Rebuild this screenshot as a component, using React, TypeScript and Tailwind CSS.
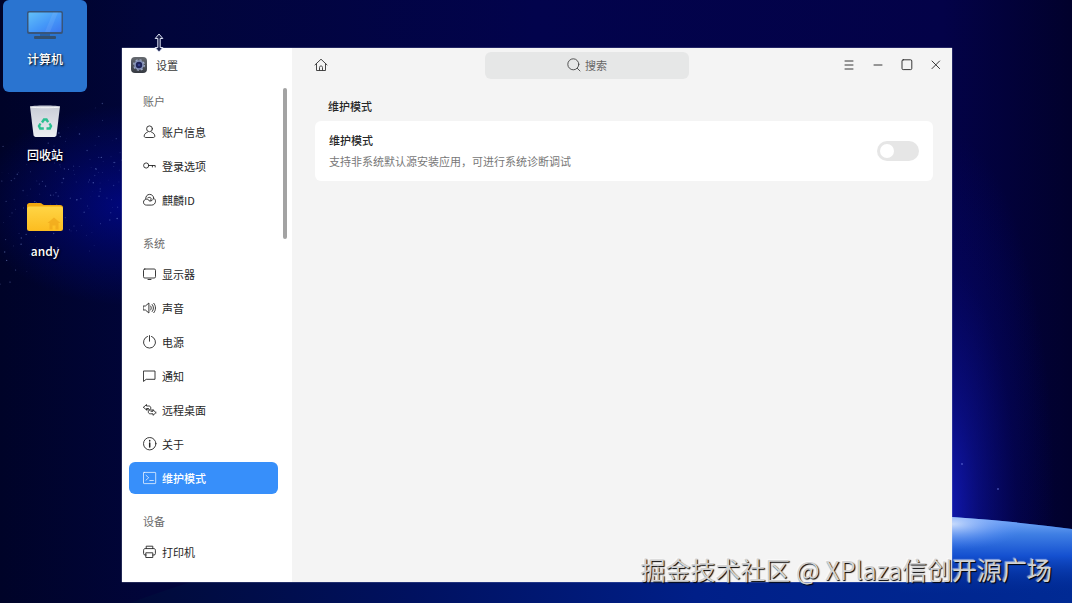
import { useState, type ReactNode } from "react";
import { clsx } from "clsx";

interface NavItem {
  id: string;
  label: string;
  icon: ReactNode;
}

interface NavGroup {
  title: string;
  items: NavItem[];
}

function Icon({ children }: { children: ReactNode }) {
  return (
    <svg
      width="14"
      height="14"
      viewBox="0 0 14 14"
      fill="none"
      stroke="currentColor"
      strokeWidth="0.9"
      strokeLinecap="round"
      strokeLinejoin="round"
      className="shrink-0"
      aria-hidden="true"
    >
      {children}
    </svg>
  );
}

const NAV: NavGroup[] = [
  {
    title: "账户",
    items: [
      {
        id: "account",
        label: "账户信息",
        icon: (
          <Icon>
            <circle cx="6.5" cy="3.8" r="2.9" />
            <path d="M4.4 7.2C2.3 8 1.200 9.400 1.200 11c0 1 .6 1.500 1.600 1.500h7.400c1 0 1.600-.5 1.600-1.500 0-1.600-1.100-3-3.200-3.800" />
          </Icon>
        ),
      },
      {
        id: "login",
        label: "登录选项",
        icon: (
          <Icon>
            <circle cx="3.2" cy="6.500" r="2.600" />
            <path d="M5.900 6.500H12.200V8M9.400 6.500V8" />
          </Icon>
        ),
      },
      {
        id: "kylin",
        label: "麒麟ID",
        icon: (
          <Icon>
            <path d="M2.700 5.800C2.600 3.300 4.200 1.400 6.600 1.400c2.300 0 4 1.600 4 3.800 1.200.6 1.900 1.700 1.900 3 0 2.200-1.600 3.900-3.800 3.900H3.500C1.700 12.100.5 10.900.5 9.200c0-1.700 1.300-3 3-3 1.500 0 2.200.9 3 1.700" />
            <path d="M4.800 4.800c1.400-.9 3-.5 3.300.7.2 1.100-.6 2-1.600 2.400 2 .4 3.600-.8 4.100-2.700" />
          </Icon>
        ),
      },
    ],
  },
  {
    title: "系统",
    items: [
      {
        id: "display",
        label: "显示器",
        icon: (
          <Icon>
            <rect x=".5" y="2" width="12" height="9" rx="1.300" />
            <path d="M5 12.500h3" />
          </Icon>
        ),
      },
      {
        id: "sound",
        label: "声音",
        icon: (
          <Icon>
            <path d="M.5 5h1.900L5.900 2v10L2.400 9H.5zM7.600 5c.9 1.200.9 2.800 0 4M9.200 3.500c1.700 2 1.700 5 0 7M10.800 2.300c2.300 2.800 2.300 6.600 0 9.400" />
          </Icon>
        ),
      },
      {
        id: "power",
        label: "电源",
        icon: (
          <Icon>
            <path d="M4.500 1.400a6 6 0 1 0 4 0M6.500.6v5.600" />
          </Icon>
        ),
      },
      {
        id: "notice",
        label: "通知",
        icon: (
          <Icon>
            <path d="M.8 2h11.200v8.300H3.200L.8 12.200z" />
          </Icon>
        ),
      },
      {
        id: "remote",
        label: "远程桌面",
        icon: (
          <Icon>
            <path d="M.5 4.300 3.500 1.500V3h2.300c1.300 0 2 .8 2 2S7 6.800 5.800 6.800H3.500" />
            <path d="M.5 4.300 3.500 7V5.500h2" />
            <path d="M13 9.600 10 12.300v-1.500H7.300c-1.200 0-2-.7-2-1.900s.8-1.900 2-1.900H10" />
            <path d="M13 9.600 10 6.800v1.500H8" />
          </Icon>
        ),
      },
      {
        id: "about",
        label: "关于",
        icon: (
          <Icon>
            <circle cx="6.700" cy="6.700" r="6.200" />
            <path d="M6.700 6v4M6.700 3.600v.3" strokeWidth="1.500" />
          </Icon>
        ),
      },
      {
        id: "maintain",
        label: "维护模式",
        icon: (
          <Icon>
            <rect x=".5" y="1.400" width="12.200" height="11.200" rx=".6" strokeWidth="0.7" />
            <path d="m3 4.300 2.700 2.400L3 9.100M6.800 9.500h3.600" strokeWidth="0.7" />
          </Icon>
        ),
      },
    ],
  },
  {
    title: "设备",
    items: [
      {
        id: "printer",
        label: "打印机",
        icon: (
          <Icon>
            <path d="M3.200 3.600V1.200h6.600v2.400M3.200 10H2C1.100 10 .6 9.500.6 8.600V5.200c0-1 .6-1.600 1.500-1.600h8.800c.9 0 1.500.6 1.500 1.600v3.400c0 .9-.5 1.400-1.400 1.400H9.800" />
            <path d="M3.200 7.800h6.600v4.700H3.200z" />
          </Icon>
        ),
      },
    ],
  },
];

const scatter = (n: number) => {
  const v = Math.sin(n * 127.1) * 43758.5;
  return v - Math.floor(v);
};

// Dust band that rises towards the right edge of the icon column
const STARS = Array.from({ length: 170 }, (_, i) => {
  const x = scatter(i + 1) * 124;
  const spread = scatter(i + 301) + scatter(i + 601) - 1;
  return {
    x,
    y: 215 - x * 0.4 + spread * 75,
    r: 0.3 + scatter(i + 901) * 0.5,
    opacity: 0.12 + scatter(i + 1201) * 0.4,
  };
});

function Wallpaper() {
  return (
    <svg
      className="absolute inset-0 h-full w-full"
      viewBox="0 0 1072 603"
      preserveAspectRatio="xMidYMid slice"
      aria-hidden="true"
    >
      <defs>
        <linearGradient id="sky" x1="0" x2="1" y1="0" y2="0">
          <stop offset="0" stopColor="#000328" />
          <stop offset="0.14" stopColor="#01053a" />
          <stop offset="0.5" stopColor="#02034c" />
          <stop offset="0.88" stopColor="#030248" />
          <stop offset="1" stopColor="#01012c" />
        </linearGradient>
        <radialGradient id="nebula">
          <stop offset="0" stopColor="#0008a0" stopOpacity="0.65" />
          <stop offset="0.5" stopColor="#0008a0" stopOpacity="0.3" />
          <stop offset="1" stopColor="#0008a0" stopOpacity="0" />
        </radialGradient>
        <radialGradient id="dawn">
          <stop offset="0" stopColor="#1620d4" />
          <stop offset="0.3" stopColor="#1018b8" stopOpacity="0.6" />
          <stop offset="0.65" stopColor="#080c98" stopOpacity="0.25" />
          <stop offset="1" stopColor="#0408a0" stopOpacity="0" />
        </radialGradient>
        <linearGradient id="earth" x1="0" x2="1" y1="0" y2="0">
          <stop offset="0" stopColor="#000a38" />
          <stop offset="0.3" stopColor="#001160" />
          <stop offset="0.6" stopColor="#001f88" />
          <stop offset="1" stopColor="#002a94" />
        </linearGradient>
        <linearGradient id="rim" x1="0" x2="0" y1="517" y2="595" gradientUnits="userSpaceOnUse">
          <stop offset="0" stopColor="#7fb0f8" />
          <stop offset="0.22" stopColor="#3f7fe4" />
          <stop offset="0.5" stopColor="#1450d0" />
          <stop offset="1" stopColor="#002a94" stopOpacity="0" />
        </linearGradient>
        <radialGradient id="flare">
          <stop offset="0" stopColor="#e0ebff" stopOpacity="0.8" />
          <stop offset="1" stopColor="#4a80ff" stopOpacity="0" />
        </radialGradient>
        <clipPath id="planet">
          <path d="M130 603C350 520 650 490 952 517Q1012 521 1072 529V603Z" />
        </clipPath>
      </defs>
      <rect width="1072" height="603" fill="url(#sky)" />
      <ellipse cx="125" cy="205" rx="150" ry="100" fill="url(#nebula)" />
      <ellipse cx="945" cy="510" rx="110" ry="380" fill="url(#dawn)" opacity="0.8" />
      {STARS.map((star, i) => (
        <circle key={i} cx={star.x} cy={star.y} r={star.r} fill="#8fa8f0" opacity={star.opacity} />
      ))}
      <circle cx="962" cy="464" r="0.8" fill="#6a78e0" />
      <circle cx="998" cy="489" r="0.8" fill="#6a78e0" />
      <g clipPath="url(#planet)">
        <rect x="130" y="480" width="942" height="123" fill="url(#earth)" />
        <rect x="900" y="500" width="172" height="103" fill="url(#rim)" />
        <ellipse cx="952" cy="524" rx="75" ry="26" fill="url(#flare)" />
      </g>
    </svg>
  );
}

function ComputerIcon() {
  return (
    <svg width="38" height="34" viewBox="0 0 38 34" aria-hidden="true">
      <defs>
        <linearGradient id="screen" x1="0" y1="0" x2="1" y2="1">
          <stop offset="0" stopColor="#62c0f8" />
          <stop offset="0.55" stopColor="#4598f8" />
          <stop offset="1" stopColor="#3c78f0" />
        </linearGradient>
      </defs>
      <path d="M14 26h10v4H14z" fill="#2560a8" />
      <rect x="8" y="28" width="22" height="3" rx="1" fill="#33506f" />
      <rect x="1" y="3" width="36" height="23" rx="2" fill="#38557a" />
      <rect x="2.500" y="4.500" width="33" height="19.500" rx="1" fill="url(#screen)" />
      <path d="m19 24 8-19.500h5L24 24z" fill="#fff" opacity="0.08" />
    </svg>
  );
}

function BinIcon() {
  return (
    <svg width="32" height="34" viewBox="0 0 32 34" aria-hidden="true">
      <defs>
        <linearGradient id="bin" x1="0" y1="0" x2="0" y2="1">
          <stop offset="0" stopColor="#c8ccd6" />
          <stop offset="1" stopColor="#eceef2" />
        </linearGradient>
      </defs>
      <path d="M1 2.500C1 1 31 1 31 2.500L27.500 31c-.2 1.500-1.500 2-3 2h-17c-1.500 0-2.800-.5-3-2z" fill="url(#bin)" />
      <path d="M1.500 3c5 1 24 1 29 0" fill="none" stroke="#fff" strokeWidth="0.8" />
      <g fill="none" stroke="#2bbf91" strokeWidth="2.400">
        <path d="m13 18.500 2-3h2.500l1.600 2.600" />
        <path d="m20.500 19.500 1.500 2.500-1.200 2.500h-3.300" />
        <path d="M14.800 24.500h-3.600L10 22l1.500-2.500" />
      </g>
    </svg>
  );
}

function FolderIcon() {
  return (
    <svg width="38" height="32" viewBox="0 0 38 32" aria-hidden="true">
      <defs>
        <linearGradient id="folder" x1="0" y1="0" x2="0" y2="1">
          <stop offset="0" stopColor="#ffd545" />
          <stop offset="1" stopColor="#fcbc20" />
        </linearGradient>
      </defs>
      <path d="M1 4.500C1 3 2 2 3.500 2H14c2 0 2.500 2 4.500 2H34c2 0 3 1 3 2.500v10H1z" fill="#f2a90f" />
      <rect x="1" y="5.500" width="36" height="24.500" rx="2.500" fill="url(#folder)" />
      <path d="m28 16.500-6.500 5.500h2v6.500h3v-4h3v4h3V22h2z" fill="#eea51a" opacity="0.7" />
    </svg>
  );
}

const SHORTCUTS = [
  { label: "计算机", icon: <ComputerIcon />, selected: true },
  { label: "回收站", icon: <BinIcon />, selected: false },
  { label: "andy", icon: <FolderIcon />, selected: false },
];

function SettingsLogo() {
  return (
    <svg width="18" height="18" viewBox="0 0 18 18" aria-hidden="true">
      <defs>
        <linearGradient id="logo" x1="0" y1="0" x2="0" y2="1">
          <stop offset="0" stopColor="#666a70" />
          <stop offset="1" stopColor="#363a42" />
        </linearGradient>
      </defs>
      <rect x="1" y="1" width="16" height="16" rx="4" fill="url(#logo)" />
      <circle cx="9" cy="9" r="4.800" fill="#8592b8" />
      <circle cx="9" cy="9" r="5.300" fill="none" stroke="#a4afcc" strokeWidth="1.200" strokeDasharray="2.080 2.080" />
      <circle cx="9" cy="9" r="3.200" fill="#1e2358" />
      <circle cx="9" cy="9" r="1.300" fill="#36418c" />
    </svg>
  );
}

function Sidebar({ active, onSelect }: { active: string; onSelect: (id: string) => void }) {
  return (
    <aside className="flex w-[170px] shrink-0 flex-col bg-white">
      <div className="flex h-[34px] items-center gap-2 pl-2 text-[11px] text-[#3a3a3a]">
        <SettingsLogo />
        <span>设置</span>
      </div>
      <div className="flex gap-[5px] pt-1.5 pl-[7px]">
        <nav className="flex w-[149px] flex-col gap-3.5">
          {NAV.map((group) => (
            <div key={group.title} className="flex flex-col gap-0.5">
              <h2 className="h-[26px] pl-3.5 text-[11px] leading-[26px] text-[#6b6b6b]">{group.title}</h2>
              {group.items.map((item) => (
                <button
                  key={item.id}
                  type="button"
                  onClick={() => onSelect(item.id)}
                  className={clsx(
                    "flex h-8 items-center gap-[5px] rounded-md pl-3.5 text-[11px]",
                    item.id === active ? "bg-[#378ffa] font-medium text-white" : "text-[#262626] hover:bg-gray-100",
                  )}
                >
                  {item.icon}
                  <span>{item.label}</span>
                </button>
              ))}
            </div>
          ))}
        </nav>
        <div className="h-[151px] w-1 rounded-full bg-[#a3a3a3]" />
      </div>
    </aside>
  );
}

function TitleBar() {
  return (
    <header className="flex h-[34px] items-center pr-0.5 pl-4">
      <button type="button" aria-label="主页" className="flex h-7 w-[26px] items-center justify-center text-[#333]">
        <Icon>
          <path d="M1 6.900 7 1.200l6 5.700M2.500 5.800v6.700h9V5.800M5.500 12.300V9.500C5.500 8.500 6 8 7 8s1.500.5 1.500 1.500v2.800" />
        </Icon>
      </button>
      <div className="flex flex-1 justify-center pl-1.5">
        <label className="flex h-[27px] w-[204px] items-center justify-center gap-1 rounded-md bg-[#e6e7e7] text-[#444]">
          <Icon>
            <circle cx="6.300" cy="6.300" r="5.500" />
            <path d="m10.300 10.300 2.700 2.700" />
          </Icon>
          <input
            type="text"
            placeholder="搜索"
            aria-label="搜索"
            className="field-sizing-content max-w-40 bg-transparent text-[11px] outline-none placeholder:text-[#666]"
          />
        </label>
      </div>
      <div className="flex text-[#222]">
        <button type="button" aria-label="菜单" className="flex h-7 w-[29px] items-center justify-center">
          <Icon>
            <path d="M3 3h8M3 7h8M3 11h8" />
          </Icon>
        </button>
        <button type="button" aria-label="最小化" className="flex h-7 w-[29px] items-center justify-center">
          <Icon>
            <path d="M3 7h8" />
          </Icon>
        </button>
        <button type="button" aria-label="最大化" className="flex h-7 w-[29px] items-center justify-center">
          <Icon>
            <rect x="2" y="1.800" width="9.800" height="9.800" rx="1.200" />
          </Icon>
        </button>
        <button type="button" aria-label="关闭" className="flex h-7 w-[29px] items-center justify-center">
          <Icon>
            <path d="m3 3 7.600 7.600M10.600 3 3 10.600" />
          </Icon>
        </button>
      </div>
    </header>
  );
}

function MaintenancePanel() {
  const [enabled, setEnabled] = useState(false);

  return (
    <section className="pt-[13px] pr-[19px] pl-[23px]">
      <h1 className="pl-[13px] text-[11px] leading-[22px] font-medium text-[#262626]">维护模式</h1>
      <div className="mt-1 flex items-center justify-between rounded-md bg-white px-3.5 py-[9px]">
        <label htmlFor="maintain-switch" className="flex flex-col text-[11px] leading-[21px]">
          <span className="font-medium text-[#262626]">维护模式</span>
          <span className="text-[#777]">支持非系统默认源安装应用，可进行系统诊断调试</span>
        </label>
        <input
          id="maintain-switch"
          type="checkbox"
          role="switch"
          checked={enabled}
          onChange={(e) => setEnabled(e.target.checked)}
          className="flex h-5 w-[42px] shrink-0 appearance-none items-center rounded-full bg-[#e6e6e6] px-[3px] before:size-3.5 before:rounded-full before:bg-white checked:justify-end checked:bg-[#378ffa]"
        />
      </div>
    </section>
  );
}

export default function App() {
  const [active, setActive] = useState("maintain");

  return (
    <div className="relative flex min-h-screen overflow-hidden bg-[#01033a] font-['Noto_Sans_CJK_SC','Noto_Sans',sans-serif]">
      <Wallpaper />

      <div className="relative ml-[3px] flex w-[84px] shrink-0 flex-col gap-1">
        {SHORTCUTS.map((s) => (
          <button
            key={s.label}
            type="button"
            className={clsx(
              "flex h-[92px] flex-col items-center rounded-md pt-2 text-xs font-medium text-white [text-shadow:1px_1px_2px_#000]",
              s.selected && "bg-[#2a74d0]",
            )}
          >
            <span className="flex h-[34px] items-center">{s.icon}</span>
            <span className="mt-2 leading-[18px]">{s.label}</span>
          </button>
        ))}
      </div>

      <div className="relative mt-12 mr-[120px] mb-[21px] ml-[35px] flex flex-1 bg-[#f4f4f4] shadow-[0_0_1px_#c8d4f0]">
        <Sidebar active={active} onSelect={setActive} />
        <main className="flex min-w-0 flex-1 flex-col">
          <TitleBar />
          <MaintenancePanel />
        </main>
      </div>

      {/* resize pointer on the window's top edge */}
      <svg className="absolute top-[33px] left-[153px]" width="12" height="20" viewBox="0 0 12 20" aria-hidden="true">
        <path
          d="M6 1 9.800 5.500H7.200v9h2.600L6 19l-3.800-4.500h2.600v-9H2.200z"
          fill="#1a1f4a"
          stroke="#dfe4f5"
          strokeWidth="1"
          strokeLinejoin="round"
        />
      </svg>

      <p className="absolute right-5 bottom-4 text-[25px] leading-9 text-[#d2d2d2] [text-shadow:1px_1px_1px_#000,-1px_-1px_1px_#fff8]">
        掘金技术社区 @ XPlaza信创开源广场
      </p>
    </div>
  );
}
